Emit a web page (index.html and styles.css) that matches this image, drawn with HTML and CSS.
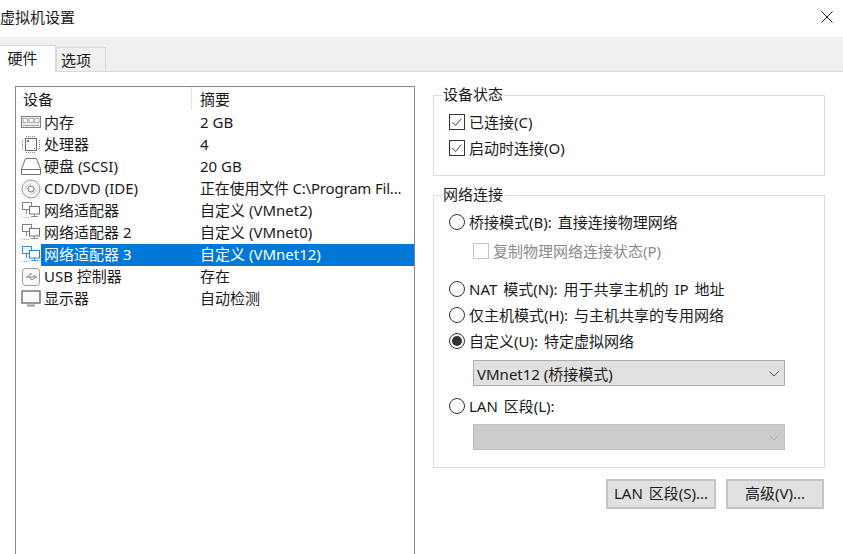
FILE: index.html
```html
<!DOCTYPE html>
<html lang="zh-CN">
<head>
    <meta charset="UTF-8">
    <meta name="viewport" content="width=device-width, initial-scale=1.0">
    <title>虚拟机设置</title>
    <link rel="stylesheet" href="styles.css">
</head>
<body>

<header class="title-bar">
    <span class="title">虚拟机设置</span>
    <svg class="close" width="12" height="12" viewBox="0 0 12 12"><path d="M0.5 0.5L11.5 11.5M11.5 0.5L0.5 11.5" stroke="#222" fill="none"/></svg>
</header>

<nav class="tabs">
    <div class="tab active">硬件</div>
    <div class="tab">选项</div>
</nav>

<main class="content">
    <section class="device-list">
        <div class="list-head">
            <div class="head-cell first">设备</div>
            <div class="head-cell">摘要</div>
        </div>

        <div class="row">
            <svg class="icon" width="20" height="20" viewBox="0 0 20 20"><rect x="0.5" y="3.5" width="19" height="11" fill="#ececec" stroke="#808080"/><path d="M2 5.5h4.5v4H2zM7.8 5.5h4.5v4H7.8zM13.5 5.5H18v4h-4.5z" fill="#fff" stroke="#9a9a9a" stroke-width="0.8"/><path d="M2 12.5h16" stroke="#aaa"/></svg>
            <span class="name">内存</span><span class="summary">2 GB</span>
        </div>
        <div class="row">
            <svg class="icon" width="20" height="20" viewBox="0 0 20 20"><rect x="4.5" y="3.5" width="11" height="12" fill="#fff" stroke="#6a6a6a"/><path d="M5 1.5h10M5 17.5h10M1.5 5v10M18.5 5v10" stroke="#8a8a8a" stroke-dasharray="1 1"/><path d="M6 5h2v2H6zM13 13h1v1h-1z" fill="#777"/></svg>
            <span class="name">处理器</span><span class="summary">4</span>
        </div>
        <div class="row">
            <svg class="icon" width="20" height="20" viewBox="0 0 20 20"><path d="M4.5 1.5h11L19.5 12v5.5H0.5V12z" fill="#fff" stroke="#707070"/><path d="M1 12.5h18" stroke="#707070"/></svg>
            <span class="name">硬盘 (SCSI)</span><span class="summary">20 GB</span>
        </div>
        <div class="row">
            <svg class="icon" width="20" height="20" viewBox="0 0 20 20"><circle cx="10" cy="10" r="9" fill="#f4f4f4" stroke="#9a9a9a"/><circle cx="10" cy="10" r="3" fill="#fff" stroke="#777"/><path d="M5 10a5 5 0 0 1 5-5M15 10a5 5 0 0 1-5 5" stroke="#c4c4c4" fill="none"/></svg>
            <span class="name">CD/DVD (IDE)</span><span class="summary cut">正在使用文件 C:\Program Fil...</span>
        </div>
        <div class="row">
            <svg class="icon" width="20" height="20" viewBox="0 0 20 20"><use href="#net"/></svg>
            <span class="name">网络适配器</span><span class="summary">自定义 (VMnet2)</span>
        </div>
        <div class="row">
            <svg class="icon" width="20" height="20" viewBox="0 0 20 20"><use href="#net"/></svg>
            <span class="name">网络适配器 2</span><span class="summary">自定义 (VMnet0)</span>
        </div>
        <div class="row selected">
            <svg class="icon" width="20" height="20" viewBox="0 0 20 20"><use href="#net-active"/></svg>
            <span class="name">网络适配器 3</span><span class="summary">自定义 (VMnet12)</span>
        </div>
        <div class="row">
            <svg class="icon" width="20" height="20" viewBox="0 0 20 20"><rect x="1.5" y="1.5" width="17" height="17" rx="3" fill="#f8f8f8" stroke="#9a9a9a"/><path d="M5 10h10M12.5 8l3 2-3 2M7 10l2-3h2M8.5 10l1.500 2.500h2" stroke="#808080" fill="none"/></svg>
            <span class="name">USB 控制器</span><span class="summary">存在</span>
        </div>
        <div class="row">
            <svg class="icon" width="20" height="20" viewBox="0 0 20 20"><rect x="1" y="2" width="18" height="12" fill="#fafafa" stroke="#777" stroke-width="1.500"/><path d="M6 16.500h8" stroke="#999" stroke-width="2"/></svg>
            <span class="name">显示器</span><span class="summary">自动检测</span>
        </div>
    </section>

    <section class="settings">
        <fieldset class="group status-group">
            <legend>设备状态</legend>
            <label class="option"><span class="check on"><svg width="12" height="12" viewBox="0 0 12 12"><path d="M1.500 6L4.500 9.500L10.500 2.500" stroke="#444" fill="none"/></svg></span>已连接(C)</label>
            <label class="option"><span class="check on"><svg width="12" height="12" viewBox="0 0 12 12"><path d="M1.500 6L4.500 9.500L10.500 2.500" stroke="#444" fill="none"/></svg></span>启动时连接(O)</label>
        </fieldset>

        <fieldset class="group network-group">
            <legend>网络连接</legend>
            <label class="option"><span class="radio"></span>桥接模式(B): 直接连接物理网络</label>
            <label class="option sub disabled"><span class="check"></span>复制物理网络连接状态(P)</label>
            <label class="option nat"><span class="radio"></span>NAT 模式(N): 用于共享主机的 IP 地址</label>
            <label class="option"><span class="radio"></span>仅主机模式(H): 与主机共享的专用网络</label>
            <label class="option"><span class="radio on"></span>自定义(U): 特定虚拟网络</label>
            <div class="select">VMnet12 (桥接模式)<svg width="10" height="6" viewBox="0 0 10 6"><path d="M0.500 0.500L5 5L9.500 0.500" stroke="#555" fill="none"/></svg></div>
            <label class="option lan"><span class="radio"></span>LAN 区段(L):</label>
            <div class="select disabled"><svg width="10" height="6" viewBox="0 0 10 6"><path d="M0.500 0.500L5 5L9.500 0.500" stroke="#aaa" fill="none"/></svg></div>
        </fieldset>

        <div class="buttons">
            <button class="lan-btn">LAN 区段(S)...</button>
            <button class="adv-btn">高级(V)...</button>
        </div>
    </section>
</main>

<svg class="defs" width="0" height="0">
    <defs>
        <g id="net">
            <rect x="1.500" y="1.500" width="9" height="7" fill="#fff" stroke="#808080"/>
            <rect x="8.500" y="5.500" width="10" height="7.500" fill="#fff" stroke="#707070"/>
            <path d="M13.500 13v2M10 15.500h7M5.500 9v4" stroke="#8a8a8a"/>
            <path d="M1 16.500h8" stroke="#aaa" stroke-dasharray="1 1"/>
        </g>
        <g id="net-active">
            <rect x="1.500" y="1.500" width="9" height="7" fill="#fff" stroke="#3a8fd0"/>
            <rect x="8.500" y="5.500" width="10" height="7.500" fill="#fff" stroke="#2a7fc4"/>
            <path d="M13.500 13v2M10 15.500h7M5.500 9v4" stroke="#3a8fd0"/>
            <path d="M1 16.500h8" stroke="#aaa" stroke-dasharray="1 1"/>
        </g>
    </defs>
</svg>

</body>
</html>
```
FILE: styles.css
```css
html, body {
    margin: 0;
    height: 554px;
    overflow: hidden;
}

body {
    background-color: #ffffff;
    color: #1a1a1a;
    font-family: "Noto Sans", "Noto Sans CJK SC", sans-serif;
    font-size: 15px;
    line-height: 20px;
}

.defs {
    display: block;
}

/* Title bar */
.title-bar {
    display: flex;
    align-items: center;
    justify-content: space-between;
    height: 37px;
    padding: 0 10px 3px 0;
    box-sizing: border-box;
}

/* Tabs */
.tabs {
    display: flex;
    align-items: flex-end;
    height: 35px;
    box-sizing: border-box;
    background-color: #f0f0f0;
    border-bottom: 1px solid #d9d9d9;
}

.tab {
    box-sizing: border-box;
    width: 50px;
    height: 24px;
    padding-right: 10px;
    text-align: center;
    line-height: 24px;
    border: 1px solid #d9d9d9;
    border-bottom: none;
}

.tab.active {
    width: 56px;
    height: 27px;
    margin-bottom: -1px;
    padding-right: 10px;
    background-color: #ffffff;
    border-left: none;
    border-right: 1px solid #d9d9d9;
}

/* Layout */
.content {
    display: flex;
    padding: 14px 0 0 15px;
}

.device-list {
    box-sizing: border-box;
    width: 400px;
    height: 468px;
    border: 1px solid #828790;
    border-bottom: none;
}

.settings {
    width: 392px;
    margin-left: 18px;
    margin-top: -1px;
}

/* Device list */
.list-head {
    display: flex;
    height: 25px;
}

.head-cell {
    height: 23px;
    line-height: 25px;
    padding-left: 7px;
}

.head-cell.first {
    width: 168px;
    border-right: 1px solid #e5e5e5;
}

.head-cell:last-child {
    padding-left: 8px;
}

.row {
    display: grid;
    grid-template-columns: 25px 151px 1fr;
    height: 22px;
    line-height: 21px;
    white-space: nowrap;
}

.icon {
    align-self: center;
    margin-left: 5px;
}

.name {
    padding-left: 3px;
}

.summary {
    padding-left: 8px;
}

.cut {
    letter-spacing: -0.2px;
}

.selected .name,
.selected .summary {
    background-color: #0078d7;
    color: #ffffff;
}

/* Group boxes */
.group {
    margin: 0;
    padding: 4px 0 0 15px;
    border: 1px solid #dcdcdc;
    min-width: 0;
}

.group legend {
    padding: 0 1px;
    margin-left: -7px;
    height: 20px;
    line-height: 19px;
}

.status-group {
    height: 91px;
    box-sizing: border-box;
}

.network-group {
    height: 283px;
    box-sizing: border-box;
    margin-top: 9px;
}

.option {
    display: flex;
    align-items: center;
    gap: 4px;
    height: 26px;
    white-space: nowrap;
    word-spacing: 2px;
}

.sub {
    margin-left: 24px;
    height: 32px;
}

.nat {
    margin-top: 9px;
}

.lan {
    margin-top: 7px;
}

.disabled {
    color: #8a8a8a;
}

.check {
    box-sizing: border-box;
    display: flex;
    align-items: center;
    justify-content: center;
    width: 16px;
    height: 16px;
    border: 1px solid #c4c4c4;
    background-color: #ffffff;
}

.check.on {
    border-color: #333333;
}

.radio {
    box-sizing: border-box;
    position: relative;
    width: 16px;
    height: 16px;
    border: 1px solid #333333;
    border-radius: 50%;
    background-color: #ffffff;
}

.radio.on::after {
    content: "";
    position: absolute;
    top: 2px;
    left: 2px;
    width: 10px;
    height: 10px;
    border-radius: 50%;
    background-color: #333333;
}

/* Drop-downs */
.select {
    box-sizing: border-box;
    display: flex;
    align-items: center;
    justify-content: space-between;
    width: 312px;
    height: 26px;
    margin-top: 6px;
    margin-left: 24px;
    padding: 1px 5px 0 3px;
    background-color: #e1e1e1;
    border: 1px solid #adadad;
}

.select.disabled {
    justify-content: flex-end;
    background-color: #cccccc;
    border-color: #bfbfbf;
    margin-top: 5px;
}

/* Buttons */
.buttons {
    display: flex;
    justify-content: flex-end;
    gap: 10px;
    margin-top: 11px;
    padding-right: 1px;
}

button {
    box-sizing: border-box;
    height: 30px;
    padding: 0 0 3px;
    font: inherit;
    color: inherit;
    word-spacing: 2px;
    background-color: #e1e1e1;
    border: 2px solid #c4c4c4;
}

.lan-btn {
    width: 110px;
}

.adv-btn {
    width: 98px;
}
```
